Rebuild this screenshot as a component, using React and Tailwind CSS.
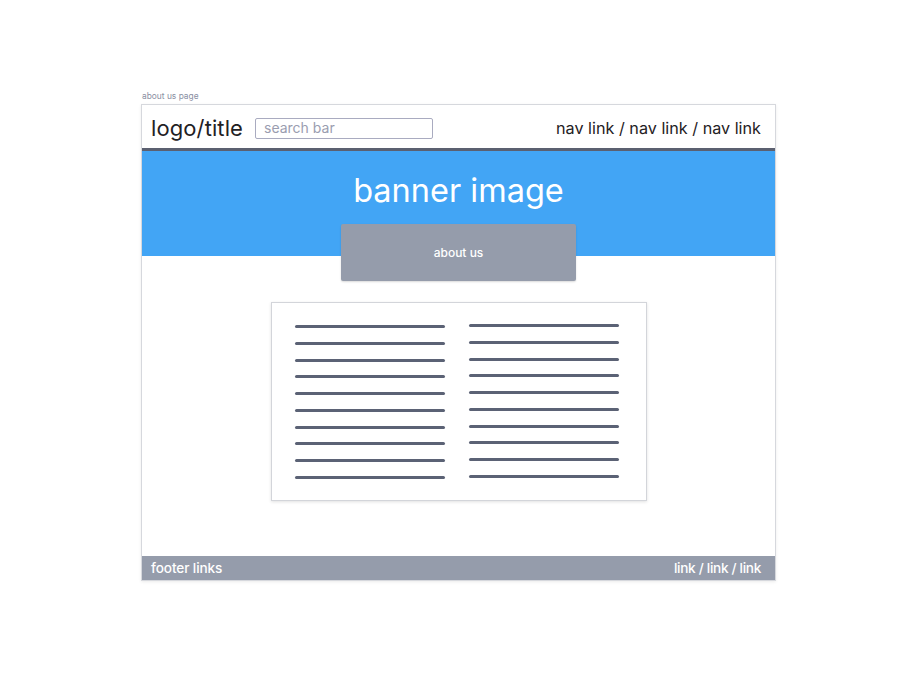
import React from 'react';

const leftLines = Array.from({ length: 10 });

const LineColumn = ({ className = '' }) => (
  <div className={`flex flex-col justify-between w-[150px] h-[154px] ${className}`}>
    {leftLines.map((_, i) => (
      <div key={i} className="h-[3px] w-full rounded-full bg-[#5b6275]" />
    ))}
  </div>
);

const App = () => {
  return (
    <div className="min-h-[684px] w-[917px] bg-white font-['Inter','Noto_Sans',sans-serif]">
      <div className="pt-[90px] pl-[141px]">
        {/* Page label */}
        <p className="text-[8.4px] leading-[12px] text-[#8a8fa3] pl-[1px] mb-[2px]">about us page</p>

        {/* Frame */}
        <div className="w-[635px] border border-[#d6d8dd] bg-white shadow-[0_1px_3px_rgba(0,0,0,0.08)] flex flex-col">
          {/* Header */}
          <div className="h-[46px] flex items-center justify-between pl-[9px] pr-[14px] pt-[3px] border-b-[3px] border-[#5b6070]">
            <div className="flex items-center gap-[12px]">
              <span className="text-[22px] leading-none text-[#1f2124] tracking-[0.1px]">logo/title</span>
              <div className="w-[178px] h-[21px] border-[1.5px] border-[#a9abc0] rounded-[2px] flex items-center px-[8px]">
                <span className="text-[14px] leading-none text-[#9a9db0]">search bar</span>
              </div>
            </div>
            <span className="text-[16.2px] leading-none text-[#1f2124]">nav link / nav link / nav link</span>
          </div>

          {/* Banner */}
          <div className="h-[105px] bg-[#42a5f5] flex justify-center pt-[22px]">
            <span className="text-[32.5px] leading-[36px] text-white">banner image</span>
          </div>

          {/* About us box */}
          <div className="flex justify-center -mt-[32px]">
            <div className="w-[235px] h-[57px] rounded-[2px] bg-[#959cab] shadow-[0_1px_2px_rgba(0,0,0,0.15)] flex items-center justify-center">
              <span className="text-[12px] font-medium text-white">about us</span>
            </div>
          </div>

          {/* Content card */}
          <div className="flex justify-center mt-[21px]">
            <div className="w-[376px] border border-[#d3d5da] shadow-[0_1px_3px_rgba(0,0,0,0.12)] bg-white flex pl-[23px] pt-[22px] pb-[21px] gap-[24px]">
              <LineColumn />
              <LineColumn className="-mt-[1px]" />
            </div>
          </div>

          {/* Footer */}
          <div className="mt-[55px] h-[24px] bg-[#959cab] flex items-center justify-between pl-[9px] pr-[14px]">
            <span className="text-[13.6px] font-medium text-white tracking-[-0.1px]">footer links</span>
            <span className="text-[13.6px] font-medium text-white tracking-[-0.3px]">link / link / link</span>
          </div>
        </div>
      </div>
    </div>
  );
};

export default App;
